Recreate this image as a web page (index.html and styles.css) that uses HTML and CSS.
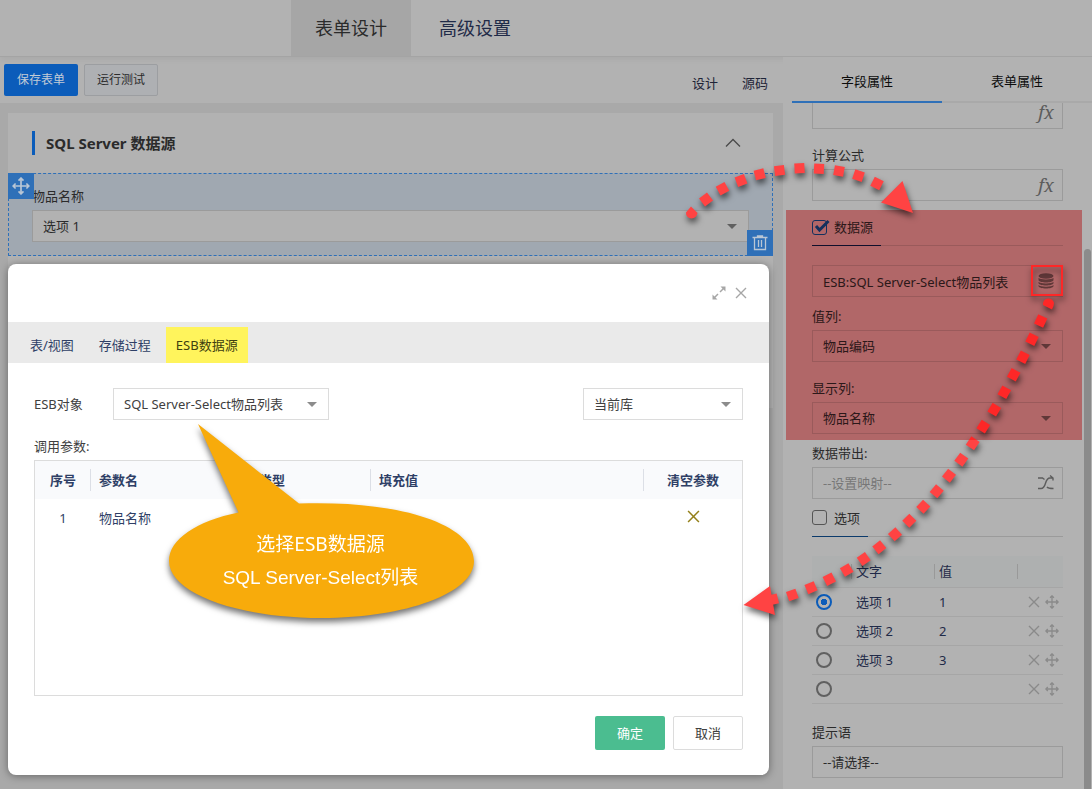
FILE: index.html
```
<!DOCTYPE html>
<html lang="zh-CN">
<head>
<meta charset="utf-8">
<title>表单设计</title>
<link rel="stylesheet" href="styles.css">
</head>
<body>
<svg class="defs" aria-hidden="true">
  <symbol id="i-move" viewBox="0 0 16 16"><path d="M8 1v14M1 8h14M5.800 3.200 8 1l2.200 2.200M5.800 12.800 8 15l2.200-2.200M3.200 5.800 1 8l2.200 2.200M12.800 5.800 15 8l-2.200 2.200" fill="none" stroke="currentColor" stroke-width="1.500"/></symbol>
  <symbol id="i-x" viewBox="0 0 12 12"><path d="M1 1l10 10M11 1 1 11" fill="none" stroke="currentColor" stroke-width="1.400"/></symbol>
</svg>

<div class="page">
  <header class="topbar">
    <nav class="topnav">
      <a class="topnav-item is-active" href="#design">表单设计</a>
      <a class="topnav-item" href="#advanced">高级设置</a>
    </nav>
  </header>

  <div class="workspace">
    <main class="main">
      <div class="toolbar">
        <button class="btn btn-save" type="button">保存表单</button>
        <button class="btn btn-test" type="button">运行测试</button>
        <nav class="modes"><a href="#view">设计</a><a href="#source">源码</a></nav>
      </div>
      <div class="canvas">
        <section class="card">
          <div class="card-head">
            <h1>SQL Server 数据源</h1>
            <button class="collapse" type="button" aria-label="收起"><svg width="16" height="10" viewBox="0 0 16 10"><path d="M1 8.500 8 1.500l7 7" fill="none" stroke="currentColor" stroke-width="1.300"/></svg></button>
          </div>
          <div class="field">
            <span class="field-move"><svg width="18" height="18"><use href="#i-move"/></svg></span>
            <label for="f-item">物品名称</label>
            <div class="pick">
              <select id="f-item"><option>选项 1</option></select><i class="caret"></i>
            </div>
            <button class="field-del" type="button" aria-label="删除"><svg width="16" height="16" viewBox="0 0 16 16"><path d="M.500 2.500h15M5.500 2V1h5v1M2.500 2.500v12h11v-12M6.500 5v7M9.500 5v7" fill="none" stroke="currentColor" stroke-width="1.300"/></svg></button>
          </div>
        </section>
      </div>

      <section class="dialog" role="dialog" aria-label="数据源">
        <div class="dialog-head">
          <button type="button" aria-label="最大化"><svg width="14" height="14" viewBox="0 0 14 14"><path d="M8 6l4-4M6 8l-4 4" fill="none" stroke="currentColor" stroke-width="1.500"/><path d="M8.500.500h5v5zM.500 8.500v5h5z" fill="currentColor"/></svg></button>
          <button type="button" aria-label="关闭"><svg width="12" height="12"><use href="#i-x"/></svg></button>
        </div>
        <nav class="dialog-tabs">
          <a href="#table">表/视图</a>
          <a href="#proc">存储过程</a>
          <a class="is-active" href="#esb">ESB数据源</a>
        </nav>
        <div class="dialog-body">
          <div class="dialog-row">
            <label for="d-esb">ESB对象</label>
            <div class="pick pick-esb"><select id="d-esb"><option>SQL Server-Select物品列表</option></select><i class="caret"></i></div>
            <div class="pick pick-db"><select aria-label="数据库"><option>当前库</option></select><i class="caret"></i></div>
          </div>
          <p class="caption">调用参数:</p>
          <div class="param-box">
            <table class="params">
              <colgroup><col class="c-no"><col class="c-name"><col class="c-type"><col><col class="c-clear"></colgroup>
              <thead><tr><th>序号</th><th>参数名</th><th>类型</th><th>填充值</th><th>清空参数</th></tr></thead>
              <tbody><tr><td>1</td><td>物品名称</td><td></td><td></td><td><button type="button" aria-label="清空"><svg width="13" height="13"><use href="#i-x"/></svg></button></td></tr></tbody>
            </table>
          </div>
          <div class="dialog-foot">
            <button class="ok" type="button">确定</button>
            <button class="cancel" type="button">取消</button>
          </div>
        </div>
      </section>
    </main>

    <aside class="side">
      <nav class="side-tabs">
        <a class="is-active" href="#field">字段属性</a>
        <a href="#form">表单属性</a>
      </nav>
      <div class="side-body">
        <div class="box box-first"><input type="text" aria-label="默认值"><span class="fx">fx</span></div>
        <label class="lab" for="s-calc">计算公式</label>
        <div class="box"><input id="s-calc" type="text"><span class="fx">fx</span></div>
        <div class="toggle">
          <label class="wide"><span class="tick"><input type="checkbox" checked><svg width="18" height="16" viewBox="0 0 18 16"><path d="M4 7l3.500 4L16.500 2" fill="none" stroke="currentColor" stroke-width="3"/></svg></span>数据源</label>
        </div>
        <div class="box box-gap"><input type="text" aria-label="数据源" value="ESB:SQL Server-Select物品列表"><button class="db" type="button" aria-label="选择数据源"><svg width="16" height="16" viewBox="0 0 16 16"><ellipse cx="8" cy="3" rx="7.500" ry="2.800"/><path d="M.500 4.800c1.500 2.300 13.500 2.300 15 0v2.400c-1 3-14 3-15 0zM.500 8.800c1.500 2.300 13.500 2.300 15 0v1.400c-1 3-14 3-15 0zM.500 11.900c1.500 2.300 13.500 2.300 15 0v1.300c-1 3-14 3-15 0z"/></svg></button></div>
        <label class="lab lab-near" for="s-val">值列:</label>
        <div class="pick"><select id="s-val"><option>物品编码</option></select><i class="caret"></i></div>
        <label class="lab" for="s-show">显示列:</label>
        <div class="pick"><select id="s-show"><option>物品名称</option></select><i class="caret"></i></div>
        <label class="lab lab-near" for="s-out">数据带出:</label>
        <div class="box"><input id="s-out" type="text" placeholder="--设置映射--"><span class="fx"><svg width="18" height="16" viewBox="0 0 18 16"><path d="M1 3h4.500l2 1.500M1 13.500h3c6 0 3-10.500 9-10.500h3M10 12c1 1.500 2 1.500 6.500 1.500M13 .500 16 3v2.500" fill="none" stroke="currentColor" stroke-width="1.400"/></svg></span></div>
        <div class="toggle toggle-next">
          <label><span class="tick"><input type="checkbox"></span>选项</label>
        </div>
        <table class="options">
          <colgroup><col class="o-pick"><col class="o-text"><col class="o-text"><col></colgroup>
          <thead><tr><th></th><th>文字</th><th>值</th><th></th></tr></thead>
          <tbody>
            <tr><td><input type="radio" name="opt" aria-label="选项 1" checked></td><td>选项 1</td><td>1</td><td><span class="ops"><svg width="12" height="12"><use href="#i-x"/></svg><svg width="14" height="14"><use href="#i-move"/></svg></span></td></tr>
            <tr><td><input type="radio" name="opt" aria-label="选项 2"></td><td>选项 2</td><td>2</td><td><span class="ops"><svg width="12" height="12"><use href="#i-x"/></svg><svg width="14" height="14"><use href="#i-move"/></svg></span></td></tr>
            <tr><td><input type="radio" name="opt" aria-label="选项 3"></td><td>选项 3</td><td>3</td><td><span class="ops"><svg width="12" height="12"><use href="#i-x"/></svg><svg width="14" height="14"><use href="#i-move"/></svg></span></td></tr>
            <tr><td><input type="radio" name="opt" aria-label="新选项"></td><td></td><td></td><td><span class="ops"><svg width="12" height="12"><use href="#i-x"/></svg><svg width="14" height="14"><use href="#i-move"/></svg></span></td></tr>
          </tbody>
        </table>
        <label class="lab lab-tip" for="s-tip">提示语</label>
        <div class="box"><input id="s-tip" type="text" value="--请选择--"></div>
      </div>
      <i class="scroll-thumb"></i>
    </aside>
  </div>

  <svg class="notes" width="1092" height="789" viewBox="0 0 1092 789" aria-hidden="true">
    <g class="red">
      <rect x="1032" y="266" width="30" height="29" fill="none" stroke="#ff4343" stroke-width="2"/>
      <path d="M1043 305a5.500 5.500 0 0 1 11-2q0 3-2 6.500z"/>
      <rect x="-5" y="-5" width="10" height="10" transform="translate(1040.700 321) rotate(25)"/>
      <rect x="-5" y="-5" width="10" height="10" transform="translate(1032 339.300) rotate(26)"/>
      <rect x="-5" y="-5" width="10" height="10" transform="translate(1023 357.300) rotate(27)"/>
      <rect x="-5" y="-5" width="10" height="10" transform="translate(1013.700 374.700) rotate(28)"/>
      <rect x="-5" y="-5" width="10" height="10" transform="translate(1004.300 392.300) rotate(29)"/>
      <rect x="-5" y="-5" width="10" height="10" transform="translate(994.300 409.700) rotate(31)"/>
      <rect x="-5" y="-5" width="10" height="10" transform="translate(983.300 426.700) rotate(32)"/>
      <rect x="-5" y="-5" width="10" height="10" transform="translate(972.700 443.300) rotate(34)"/>
      <rect x="-5" y="-5" width="10" height="10" transform="translate(961.300 459.700) rotate(36)"/>
      <rect x="-5" y="-5" width="10" height="10" transform="translate(949 475.700) rotate(38)"/>
      <rect x="-5" y="-5" width="10" height="10" transform="translate(936.700 491.300) rotate(40)"/>
      <rect x="-5" y="-5" width="10" height="10" transform="translate(923.300 506.700) rotate(43)"/>
      <rect x="-5" y="-5" width="10" height="10" transform="translate(909.300 520.700) rotate(45)"/>
      <rect x="-5" y="-5" width="10" height="10" transform="translate(895 534.300) rotate(48)"/>
      <rect x="-5" y="-5" width="10" height="10" transform="translate(879.300 547.300) rotate(51)"/>
      <rect x="-5" y="-5" width="10" height="10" transform="translate(863.700 559) rotate(55)"/>
      <rect x="-5" y="-5" width="10" height="10" transform="translate(846.700 570) rotate(59)"/>
      <rect x="-5" y="-5" width="10" height="10" transform="translate(829.300 579.300) rotate(63)"/>
      <rect x="-5" y="-5" width="10" height="10" transform="translate(811 587.700) rotate(67)"/>
      <rect x="-5" y="-5" width="10" height="10" transform="translate(792.300 595) rotate(71)"/>
      <rect x="-5" y="-5" width="10" height="10" transform="translate(773 599.500) rotate(76)"/>
      <path d="M743.500 605 770 586l5 29z"/>
    </g>
  </svg>
  <div class="highlight"></div>
  <svg class="notes" width="1092" height="789" viewBox="0 0 1092 789" aria-hidden="true">
    <g class="red">
      <path d="M691 206.500l6.500 6.500q-1 5-6 5.500a5.500 5.500 0 0 1-5.500-6z"/>
      <rect x="-5" y="-5" width="10" height="10" transform="translate(706 199.500) rotate(-37)"/>
      <rect x="-5" y="-5" width="10" height="10" transform="translate(722.500 188.700) rotate(-29)"/>
      <rect x="-5" y="-5" width="10" height="10" transform="translate(741 180.500) rotate(-21)"/>
      <rect x="-5" y="-5" width="10" height="10" transform="translate(759.700 174.300) rotate(-14)"/>
      <rect x="-5" y="-5" width="10" height="10" transform="translate(779.500 170.500) rotate(-7)"/>
      <rect x="-5" y="-5" width="10" height="10" transform="translate(799.500 168.300) rotate(-3)"/>
      <rect x="-5" y="-5" width="10" height="10" transform="translate(819 168.800) rotate(3)"/>
      <rect x="-5" y="-5" width="10" height="10" transform="translate(839 171) rotate(10)"/>
      <rect x="-5" y="-5" width="10" height="10" transform="translate(858.500 175.600) rotate(18)"/>
      <rect x="-5" y="-5" width="10" height="10" transform="translate(877 183.500) rotate(27)"/>
      <path d="M913 213l-10.500-32L881 202.500z"/>
    </g>
    <path class="bubble" d="M198 424 299 503.500C405 500 474 526 474 561c0 32-68 57-152.500 57S169 593 169 561c0-22 28-40 69.500-48.500z"/>
  </svg>
  <div class="bubble-text"><p>选择ESB数据源</p><p class="arial">SQL Server-Select列表</p></div>
</div>
</body>
</html>
```
FILE: styles.css
```
* { box-sizing: border-box; }
body { margin: 0; background: #b2b2b2; color: #2b2b2b; font: 13px/20px "Noto Sans", "Noto Sans CJK SC", sans-serif; }
a { color: inherit; text-decoration: none; }
p, h1 { margin: 0; }
button, input, select { font: inherit; color: inherit; margin: 0; }
button { padding: 0; border: 0; background: none; }
button svg, span svg { display: block; }
table { border-collapse: collapse; table-layout: fixed; width: 100%; }
.defs { position: absolute; width: 0; height: 0; }
.page { position: relative; display: flex; flex-direction: column; min-height: 100vh; overflow: hidden; }

.topbar { border-bottom: 1px solid #a4a4a4; box-shadow: 0 2px 6px rgba(0, 0, 0, .06); padding-left: 291px; }
.topnav { display: flex; height: 56px; }
.topnav-item { display: flex; align-items: center; padding: 0 28px; font-size: 18px; color: #1f2a48; }
.topnav-item.is-active { padding: 0 24px; background: #a6a6a6; color: #2b2b2b; }

.workspace { display: flex; flex: 1; }
.main { position: relative; flex: 1; display: flex; flex-direction: column; }
.toolbar { display: flex; align-items: center; gap: 6px; padding: 7px 15px 7px 4px; }
.btn { width: 74px; height: 32px; border-radius: 2px; font-size: 12px; }
.btn-save { background: #0b5cba; color: #c2cbd6; }
.btn-test { border: 1px solid #9c9ea1; background: #aeb0b3; }
.modes { display: flex; gap: 24px; margin-left: auto; padding-top: 6px; color: #1f2438; }
.canvas { flex: 1; padding: 10px 10px 0 8px; background: #a9a9a9; }
.card { background: #b2b2b2; padding-bottom: 152px; }
.card-head { display: flex; align-items: center; height: 60px; padding: 0 32px 0 24px; }
.card-head h1 { border-left: 3px solid #0b5cba; padding-left: 11px; font-size: 15px; line-height: 24px; font-weight: 700; }
.collapse { margin-left: auto; color: #4a4a4a; }
.field { position: relative; padding: 12px 23px 13px; border: 1px dashed #2f70b8; background: #a0a8b1; }
.field > label { display: block; height: 24px; }
.field-move, .field-del { position: absolute; display: grid; place-items: center; width: 26px; height: 26px; background: #2f70b8; color: #b9c6d5; }
.field-move { left: -1px; top: -1px; }
.field-del { right: -1px; bottom: -1px; }

.pick { display: grid; align-items: center; }
.pick > * { grid-area: 1 / 1; }
.pick select { width: 100%; height: 32px; padding: 0 30px 0 10px; border: 1px solid #9b9b9b; border-radius: 0; background: #b2b2b2; appearance: none; outline: 0; }
.caret { justify-self: end; margin-right: 12px; border: 5px solid transparent; border-bottom: 0; border-top-color: #606060; pointer-events: none; }

.dialog { position: absolute; z-index: 1; left: 8px; right: 14px; top: 207px; overflow: hidden; border-radius: 8px; background: #fff; box-shadow: 0 1px 8px rgba(0, 0, 0, .4); color: #404040; }
.dialog-head { display: flex; justify-content: flex-end; align-items: center; gap: 9px; height: 58px; padding-right: 22px; color: #a6a6a6; }
.dialog-tabs { display: flex; align-items: flex-end; height: 41px; gap: 5px; padding-left: 12px; background: #eaeaea; color: #2f3f66; }
.dialog-tabs a { padding: 8px 10px; }
.dialog-tabs .is-active { background: #fff45c; color: #404010; }
.dialog-body { padding: 25px 26px; }
.dialog-row { display: flex; align-items: center; }
.dialog-row label { width: 79px; }
.dialog .pick select { border-color: #dcdcdc; background: #fff; }
.dialog .caret { border-top-color: #8c8c8c; }
.pick-esb { width: 216px; }
.pick-db { width: 160px; margin-left: auto; }
.caption { padding: 16px 0 4px; }
.param-box { min-height: 236px; border: 1px solid #dcdcdc; }
.params { color: #2f3f66; }
.c-no { width: 56px; }
.c-name { width: 160px; }
.c-type { width: 120px; }
.c-clear { width: 98px; }
.params th, .params td { height: 38px; padding: 0 0 0 8px; text-align: left; }
.params th:first-child, .params td:first-child, .params th:last-child, .params td:last-child { padding: 0; text-align: center; }
.params thead { background: #f9fafc; }
.params th:not(:last-child) { background: linear-gradient(#dcdfe6, #dcdfe6) right center / 1px 22px no-repeat; }
.params td button { display: inline-block; color: #94801a; }
.dialog-foot { display: flex; justify-content: flex-end; gap: 8px; padding-top: 20px; }
.dialog-foot button { width: 70px; height: 34px; border-radius: 2px; }
.ok { background: #4bbd90; color: #fff; }
.cancel { border: 1px solid #dcdcdc; }

.side { position: relative; width: 309px; background: #b2b2b2; }
.side-tabs { display: flex; height: 46px; margin-left: 9px; border-bottom: 2px solid #a9a9a9; color: #0c0c0c; }
.side-tabs a { width: 150px; padding-top: 14px; height: 46px; text-align: center; }
.side-tabs .is-active { border-bottom: 2px solid #2f70b8; }
.side-body { margin: 0 29px; padding-bottom: 11px; }
.box { display: flex; align-items: center; height: 32px; border: 1px solid #9b9b9b; }
.box-first { height: 26px; border-top: 0; }
.box input { flex: 1; min-width: 0; height: 30px; padding: 0 10px; border: 0; background: none; outline: 0; }
.box input::placeholder { color: #777; opacity: 1; }
.fx { width: 32px; display: grid; place-items: center; color: #5c5c5c; font: italic 18px/18px "Noto Serif", "Liberation Serif", serif; }
.box-first .fx { align-self: flex-start; }
.db { width: 32px; display: grid; place-items: center; }
.db svg { fill: #606060; }
.lab { display: block; padding: 16px 0 4px; }
.lab-near { padding-top: 9px; }
.lab-tip { padding-top: 18px; }
.toggle { height: 37px; margin-top: 8px; border-bottom: 1px solid #9b9b9b; }
.toggle-next { margin-top: 1px; }
.toggle label { display: inline-flex; align-items: center; gap: 7px; width: 56px; height: 37px; padding-bottom: 1px; border-bottom: 1px solid #0b3a6b; }
.toggle .wide { width: 69px; border-color: #101a4a; }
.tick { display: grid; align-items: center; width: 15px; height: 15px; color: #12529f; }
.tick > * { grid-area: 1 / 1; }
.tick input { appearance: none; width: 15px; height: 15px; border: 1px solid #555; border-radius: 3px; }
.tick input:checked { border: 1px solid #12529f; }
.tick svg { width: 18px; }
.box-gap { margin-top: 19px; }
.options { margin-top: 19px; color: #1f2a48; }
.o-pick { width: 40px; }
.o-text { width: 83px; }
.options thead { background: #aeb0b0; }
.options th { height: 31px; font-weight: 400; }
.options th, .options td { padding: 0 0 0 4px; border-bottom: 1px solid #a6a6a6; text-align: left; }
.options th:not(:last-child) { background: linear-gradient(#999, #999) right center / 1px 15px no-repeat; }
.options td { height: 29px; }
.options input { display: block; appearance: none; width: 16px; height: 16px; border: 2px solid #606060; border-radius: 50%; }
.options input:checked { border-color: #0b5cba; background: radial-gradient(circle, #0b5cba 3px, transparent 3px); }
.ops { display: flex; align-items: center; justify-content: flex-end; gap: 5px; padding-right: 4px; color: #8a8a8a; }
.scroll-thumb { position: absolute; right: 1px; top: 192px; bottom: -10px; width: 7px; border-radius: 4px; background: #8b8b8b; }

.notes { position: absolute; z-index: 2; left: 0; top: 0; pointer-events: none; }
.red { fill: #ff4343; filter: drop-shadow(1px 4px 3px rgba(0, 0, 0, .6)); }
.highlight { position: absolute; z-index: 2; left: 786px; top: 210px; width: 296px; height: 230px; background: #fe9395; mix-blend-mode: multiply; pointer-events: none; }
.bubble { fill: #f8ab0b; filter: drop-shadow(0 4px 3px rgba(0, 0, 0, .55)); }
.bubble-text { position: absolute; z-index: 3; left: 169px; top: 528px; width: 303px; color: #fff; font-size: 19px; line-height: 33px; text-align: center; pointer-events: none; }
.arial { font-family: "Liberation Sans", "Noto Sans CJK SC", sans-serif; }
```
